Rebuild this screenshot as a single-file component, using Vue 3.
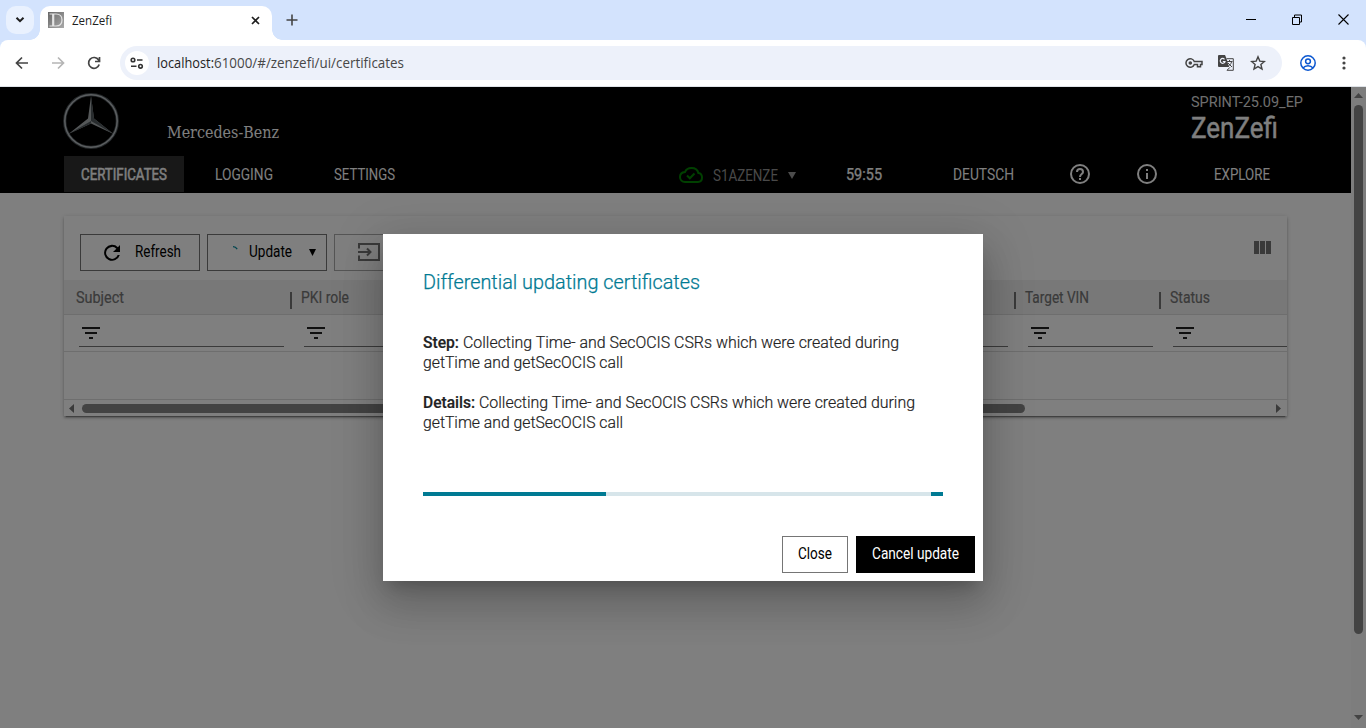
<script setup>
import { h } from 'vue'

// A single line of text set to an exact advance width.
const Line = (props) =>
  h('svg', { class: 'line', width: props.w, height: 20, viewBox: `0 0 ${props.w} 20` }, [
    h('text', { x: 0, y: 15, textLength: props.w, lengthAdjust: 'spacingAndGlyphs' }, props.t),
  ])
Line.props = ['t', 'w']

const columns = [
  { id: 'subject', label: 'Subject', w: 48 },
  { id: 'role', label: 'PKI role', w: 48 },
  { id: 'vin', label: 'Target VIN', w: 64 },
  { id: 'status', label: 'Status', w: 40 },
]
</script>

<template>
  <div class="browser">
    <div class="tabstrip">
      <div class="tabsearch">
        <svg width="10" height="8" viewBox="0 0 10 8"><path d="M1.500 1.700 5 5.200 8.500 1.700" fill="none" stroke="#1f1f1f" stroke-width="2" /></svg>
      </div>
      <div class="tab">
        <svg class="favicon" width="16" height="16" viewBox="0 0 16 16">
          <defs><linearGradient id="fav" x2="1" y2="1"><stop stop-color="#666" /><stop offset="1" stop-color="#aaa" /></linearGradient></defs>
          <rect width="16" height="16" fill="url(#fav)" />
          <path d="M1.500 2H8c4 0 6 2.500 6 6s-2 6-6 6H1.500" fill="none" stroke="#e4e4e4" stroke-width="1.200" />
          <path d="M5.200 2v12" stroke="#e4e4e4" stroke-width="2.200" />
        </svg>
        <Line class="tabname" t="ZenZefi" :w="40" />
        <svg class="tabclose" width="9" height="9" viewBox="0 0 9 9"><path d="m1 1 7 7M8 1 1 8" stroke="#1f1f1f" stroke-width="1.700" /></svg>
      </div>
      <svg class="newtab" width="12" height="12" viewBox="0 0 12 12"><path d="M6 .5v11M.5 6h11" stroke="#444" stroke-width="1.600" /></svg>
      <div class="winbuttons">
        <svg width="10" height="11" viewBox="0 0 10 11"><path d="M0 5.500h10" stroke="#000" /></svg>
        <svg width="10" height="11" viewBox="0 0 10 11" fill="none" stroke="#000"><path d="M.5 3.500h7v7h-7zM2.500 3V1h7v7H8" /></svg>
        <svg width="11" height="11" viewBox="0 0 11 11"><path d="m.5.5 10 10M10.500.5l-10 10" stroke="#000" stroke-width="1.100" /></svg>
      </div>
    </div>

    <div class="toolbarback">
      <div class="toolbar">
        <svg class="nav" width="16" height="16" viewBox="0 0 16 16" fill="none" stroke="#444" stroke-width="1.700"><path d="M14 8H3M8 2.500 2.500 8 8 13.500" /></svg>
        <svg class="nav" width="16" height="16" viewBox="0 0 16 16" fill="none" stroke="#b5b5b5" stroke-width="1.700"><path d="M2 8h11M8 2.500 13.500 8 8 13.500" /></svg>
        <svg class="nav" width="16" height="16" viewBox="0 0 16 16" fill="none" stroke="#444" stroke-width="1.700"><path d="M13.200 9.500A5.400 5.400 0 1 1 12.600 5L14 6.500M13.500 2v4.500H9" /></svg>
        <div class="omnibox">
          <div class="siteinfo">
            <svg width="14" height="12" viewBox="0 0 14 12" fill="none" stroke="#333" stroke-width="1.600"><circle cx="3" cy="3" r="1.800" /><path d="M7 3h5.500M1 9.300h5.500" /><circle cx="10.500" cy="9.300" r="1.800" /></svg>
          </div>
          <Line class="host" t="localhost:" :w="57" /><Line class="path" t="61000/#/zenzefi/ui/certificates" :w="190" />
          <div class="actions">
            <svg width="18" height="12" viewBox="0 0 18 12" fill="none" stroke="#444" stroke-width="1.500"><path d="M9.300 4.500H17v3h-1.500v2.200h-3V7.500H9.300a4.300 4.300 0 1 1 0-3z" /><circle cx="5.300" cy="6" r="1.800" fill="#444" stroke="none" /></svg>
            <svg width="16" height="16" viewBox="0 0 16 16"><path d="M1 0h6l1.500 3.500L11 12H1a1 1 0 0 1-1-1V1a1 1 0 0 1 1-1z" fill="#444" /><path d="M6.500 4.300A2.400 2.400 0 1 0 7 6.500H4.800" fill="none" stroke="#edf1fa" stroke-width="1.200" /><path d="M8.700 3.700h6.600v11.600H9l3-3M8.500 6.500h6M11.500 5v1.500M13.500 7c-.5 2-2 3.500-3.500 4.500M10 8l4 4" fill="none" stroke="#444" /></svg>
            <svg width="16" height="16" viewBox="0 0 16 16"><path d="m8 1.800 1.800 4.300 4.600.4-3.500 3 1.100 4.500-4-2.400L4 14l1.100-4.500-3.500-3 4.600-.4z" fill="none" stroke="#444" stroke-width="1.400" /></svg>
          </div>
        </div>
        <svg class="profile" width="16" height="16" viewBox="0 0 16 16" fill="none" stroke="#0b57d0" stroke-width="1.500"><circle cx="8" cy="8" r="7.200" /><circle cx="8" cy="6.300" r="2.400" /><path d="M3 13c2.500-3 7.500-3 10 0" /></svg>
        <svg class="kebab" width="4" height="14" viewBox="0 0 4 14" fill="#444"><circle cx="2" cy="2" r="1.600" /><circle cx="2" cy="7" r="1.600" /><circle cx="2" cy="12" r="1.600" /></svg>
      </div>
    </div>

    <div class="viewport">
      <div class="page">
        <header>
          <div class="brand">
            <svg class="star" width="56" height="56" viewBox="0 0 56 56">
              <circle cx="28" cy="28" r="26.300" fill="none" stroke="#4b5256" stroke-width="3.200" />
              <circle cx="28" cy="28" r="26.200" fill="none" stroke="#b7bdc1" stroke-width="1.500" />
              <path d="m28 3-3 22.500L5.500 41 28 30.500 50.500 41 31 25.500z" fill="#a9aeb1" />
              <path d="M28 3v25l3-2.500zM5.500 41 28 28v2.500zM50.500 41 28 28l3-2.500z" fill="#50585c" />
            </svg>
            <Line class="wordmark" t="Mercedes-Benz" :w="112" />
            <div class="product">
              <Line class="release" t="SPRINT-25.09_EP" :w="112" />
              <Line class="appname" t="ZenZefi" :w="87" />
            </div>
          </div>
          <nav>
            <div class="active"><Line t="CERTIFICATES" :w="86" /></div>
            <Line class="logging" t="LOGGING" :w="58" />
            <Line class="settings" t="SETTINGS" :w="61" />
            <svg class="cloud" width="24" height="16" viewBox="0 0 24 16" fill="none" stroke="#008000" stroke-width="2"><path d="M19.400 6C18.700 3 16 1 12.500 1 9.500 1 7 2.500 6 5 3 5.300 1 7.300 1 10c0 2.800 2.200 5 5 5h13c2.300 0 4-1.800 4-4.400C23 8 21.500 6.300 19.400 6z" /><path d="m8 8.500 2.800 2.800L15.500 6.500" /></svg>
            <Line class="user" t="S1AZENZE" :w="65" />
            <svg class="caret" width="8" height="7" viewBox="0 0 8 7"><path d="M0 0h8L4 7z" fill="#999" /></svg>
            <Line class="timer" t="59:55" :w="36" />
            <Line class="language" t="DEUTSCH" :w="61" />
            <svg class="help" width="20" height="20" viewBox="0 0 20 20" fill="none" stroke="#fff" stroke-width="2"><circle cx="10" cy="10" r="9" /><path d="M7 8a3 3 0 1 1 6 0c0 2-3 2.200-3 5M10 14v2" /></svg>
            <svg class="info" width="20" height="20" viewBox="0 0 20 20" fill="none" stroke="#fff" stroke-width="2"><circle cx="10" cy="10" r="9" /><path d="M10 5v2M10 9v6" /></svg>
            <Line class="explore" t="EXPLORE" :w="56" />
          </nav>
        </header>

        <section class="card">
          <div class="cardtools">
            <button class="outlined">
              <svg class="refresh" width="18" height="18" viewBox="0 0 18 18"><path d="M14.900 3.200A8 8 0 1 0 16.800 11h-2.100A6 6 0 1 1 13.400 4.700L10 8h7V1z" fill="#000" /></svg>
              <Line t="Refresh" :w="46" />
            </button>
            <button class="outlined update">
              <svg width="5" height="4" viewBox="0 0 5 4"><path d="M0 .7c2 0 3.200.8 4.200 2.500" fill="none" stroke="#008a9e" stroke-width="1.300" /></svg>
              <Line t="Update" :w="43" />
              <svg class="down" width="7" height="7" viewBox="0 0 7 7"><path d="M0 0h7L3.500 7z" /></svg>
            </button>
            <button class="outlined import">
              <svg width="22" height="18" viewBox="0 0 22 18" fill="none" stroke="#757575" stroke-width="2"><path d="M1 5.500V1h20v16H1v-4.500M0 9h12M9 5.500 12.500 9 9 12.500" /></svg>
            </button>
            <svg class="columnicon" width="17" height="13" viewBox="0 0 17 13"><path d="M0 0h5v13H0zM6 0h5v13H6zM12 0h5v13h-5z" fill="#757575" /></svg>
          </div>
          <div class="row heads">
            <div v-for="c in columns" :key="c.id" class="head"><i /><Line :t="c.label" :w="c.w" /></div>
          </div>
          <div class="row filters">
            <div v-for="c in columns" :key="c.id" class="filter" :class="c.id">
              <svg width="18" height="12" viewBox="0 0 18 12"><path d="M0 0h18v2H0zM3 5h12v2H3zM7 10h4v2H7z" fill="#202020" /></svg>
            </div>
          </div>
          <div class="empty" />
          <div class="hscroll">
            <svg width="5" height="9" viewBox="0 0 5 9"><path d="M5 0v9L0 4.500z" /></svg>
            <div class="hthumb" />
            <svg class="right" width="5" height="9" viewBox="0 0 5 9"><path d="M0 0v9l5-4.500z" /></svg>
          </div>
        </section>
      </div>
      <div class="vscroll">
        <svg width="9" height="5" viewBox="0 0 9 5"><path d="M0 5h9L4.500 0z" /></svg>
        <div class="vthumb" />
        <svg class="bottom" width="9" height="5" viewBox="0 0 9 5"><path d="M0 0h9L4.500 5z" /></svg>
      </div>

      <div class="backdrop">
        <div class="dialog">
          <div class="title"><Line t="Differential updating certificates" :w="277" /></div>
          <div class="message">
            <div><Line class="strong" t="Step:" :w="36" /><Line t="Collecting Time- and SecOCIS CSRs which were created during" :w="436" /></div>
            <div><Line t="getTime and getSecOCIS call" :w="200" /></div>
          </div>
          <div class="message">
            <div><Line class="strong" t="Details:" :w="52" /><Line t="Collecting Time- and SecOCIS CSRs which were created during" :w="436" /></div>
            <div><Line t="getTime and getSecOCIS call" :w="200" /></div>
          </div>
          <div class="progress"><b class="first" /><b class="second" /></div>
          <div class="buttons">
            <button class="outlined close"><Line t="Close" :w="34" /></button>
            <button class="cancel"><Line t="Cancel update" :w="87" /></button>
          </div>
        </div>
      </div>
    </div>
  </div>
</template>

<style>
body { overflow: hidden; }
</style>

<style scoped>
* { box-sizing: border-box; }
svg { display: block; flex: none; }
.browser { width: 1366px; height: 728px; display: flex; flex-direction: column; font-family: Roboto, "Liberation Sans", sans-serif; font-size: 16px; }
.line { overflow: visible; fill: currentColor; }

.tabstrip { height: 40px; display: flex; align-items: flex-start; background: #d3e3fd; }
.tabsearch { width: 28px; height: 28px; margin: 6px 6px 0; border-radius: 10px; background: #e9f1fe; display: flex; align-items: center; justify-content: center; }
.tab { position: relative; width: 232px; height: 34px; margin-top: 6px; padding: 0 12px 6px 8px; border-radius: 10px 10px 0 0; background: #fff; display: flex; align-items: center; }
.tab::before, .tab::after { content: ""; position: absolute; bottom: 0; width: 10px; height: 10px; }
.tab::before { left: -10px; background: radial-gradient(circle at 0 0, transparent 9.5px, #fff 10px); }
.tab::after { right: -10px; background: radial-gradient(circle at 100% 0, transparent 9.5px, #fff 10px); }
.tabname { margin: 0 0 0 8px; font: 12px "Open Sans", "Noto Sans", sans-serif; color: #1f1f1f; }
.tabclose { margin-left: auto; }
.newtab { margin: 14px 0 0 14px; }
.winbuttons { margin: 14px 17px 0 auto; display: flex; gap: 36px; }

.toolbarback { height: 47px; background: #d3e3fd; }
.toolbar { height: 47px; border-radius: 8px 8px 0 0; border-bottom: 1px solid #dfe3e8; background: #fff; display: flex; align-items: center; padding-left: 14px; }
.nav { margin-right: 20px; }
.nav:nth-child(3) { margin-right: 18px; }
.omnibox { width: 1162px; height: 34px; border-radius: 17px; background: #edf1fa; display: flex; align-items: center; padding: 0 16px 0 5px; font: 14px "Open Sans", "Noto Sans", sans-serif; color: #474747; }
.siteinfo { width: 24px; height: 24px; border-radius: 12px; background: #fff; display: flex; align-items: center; justify-content: center; margin-right: 8px; }
.host { color: #1f1f1f; }
.actions { margin-left: auto; display: flex; align-items: center; gap: 16px; }
.actions svg:first-child { margin-right: -1px; }
.profile { margin-left: 18px; }
.kebab { margin-left: 26px; }

.viewport { position: relative; height: 641px; display: flex; background: #fff; overflow: hidden; }
.page { width: 1351px; }
header { height: 106px; background: #000; color: #fff; padding: 0 0 1px 64px; }
.brand { height: 69px; display: flex; align-items: flex-start; }
.star { margin: 6px 0 0 -1px; }
.wordmark { margin: 36px 0 0 48px; font: 17px "DejaVu Serif Condensed", "DejaVu Serif", serif; }
.product { margin: 5px 48px 0 auto; width: 112px; }
.release { font-size: 15px; fill: #ddd; }
.appname { margin-top: 11px; font-size: 29px; stroke: #fff; stroke-width: .35px; }
nav { height: 36px; display: flex; align-items: center; }
nav > .line, .active .line { position: relative; top: .5px; }
.active { width: 120px; height: 36px; padding: 8px 17px; background: #303030; stroke: #fff; stroke-width: .5px; }
.logging { margin-left: 31px; }
.settings { margin-left: 61px; }
.cloud { margin: 2px 0 0 284px; }
.user { margin: 2px 0 0 10px; color: #929292; }
.caret { margin: 2px 0 0 10px; }
nav > .timer { margin: 2px 0 0 50px; top: 0; stroke: #fff; stroke-width: .25px; }
.language { margin-left: 71px; }
.help { margin-left: 56px; }
.info { margin-left: 47px; }
.explore { margin-left: 57px; }

.card { width: 1223px; height: 200px; margin: 23px 0 0 64px; overflow: hidden; background: #fff; box-shadow: 0 3px 1px -2px rgba(0,0,0,.3), 0 2px 2px rgba(0,0,0,.2), 0 1px 5px rgba(0,0,0,.18); }
.cardtools { height: 64px; display: flex; align-items: flex-start; padding: 18px 16px 0; gap: 7px; }
button { height: 37px; padding: 0 0 1px; border: 0; border-radius: 0; font: inherit; color: #000; display: flex; align-items: center; }
.outlined { width: 120px; background: transparent; border: 1px solid #757575; }
.refresh { margin: 2px 14px 0 22px; }
.update { padding-left: 25px; }
.update .line { margin-left: 11px; }
.update svg:first-child { margin-top: -8px; }
.down { margin-left: 17px; }
.import { padding-left: 23px; border-color: #aaa; }
.columnicon { margin: 7px 0 0 auto; }
.row { display: grid; grid-template-columns: 225px 724px 145px 145px; padding-left: 1px; border-bottom: 1px solid #dcdcdc; }
.heads { height: 35px; background: #f1f1f1; color: #757575; }
.head { display: flex; padding-top: 7px; stroke: #757575; stroke-width: .2px; }
.head .line { margin-top: .5px; }
.head i { width: 2px; height: 17px; margin: 5px 9px 0 0; background: #757575; }
.head:first-child i { visibility: hidden; }
.filters { height: 37px; }
.filter { height: 32px; margin: 0 6px 0 14px; padding: 12px 3px 0; border-bottom: 1px solid #757575; }
.empty { height: 48px; border-bottom: 1px solid #dcdcdc; }
.hscroll { height: 16px; display: flex; align-items: center; padding: 0 6px 0 5px; fill: #757575; }
.hthumb { width: 943px; height: 9px; margin-left: 8px; border-radius: 5px; background: #868686; }
.right { margin-left: auto; }
.vscroll { width: 15px; background: #fafafa; padding: 6px 3px 8px; display: flex; flex-direction: column; fill: #868686; }
.vthumb { width: 9px; height: 529px; margin-top: 7px; border-radius: 5px; background: #868686; }
.bottom { margin-top: auto; }

.backdrop { position: absolute; inset: 0; padding: 147px 0 0 383px; background: rgba(0,0,0,.5); }
.dialog { width: 600px; height: 347px; padding: 37px 8px 8px 40px; background: #fff; color: #222; box-shadow: 0 11px 15px -7px rgba(0,0,0,.2), 0 24px 38px 3px rgba(0,0,0,.14), 0 9px 46px 8px rgba(0,0,0,.12); }
.title { margin: 3px 0 39px; font-size: 20px; font-weight: 300; color: #007a93; stroke: #007a93; stroke-width: .25px; }
.message { margin-bottom: 20px; }
.message div { display: flex; gap: 4px; }
.message .line { font-weight: 300; stroke: #222; stroke-width: .2px; }
.message .strong { font-weight: 500; }
.progress { width: 520px; height: 4px; margin-top: 59px; background: #d7e5ea; display: flex; justify-content: space-between; }
.first { width: 183px; background: #007a93; }
.second { width: 12px; background: #007a93; }
.buttons { display: flex; justify-content: flex-end; gap: 8px; margin-top: 40px; }
.close { width: 66px; padding-left: 15px; }
.cancel { width: 119px; padding-left: 16px; background: #000; color: #fff; }
</style>
